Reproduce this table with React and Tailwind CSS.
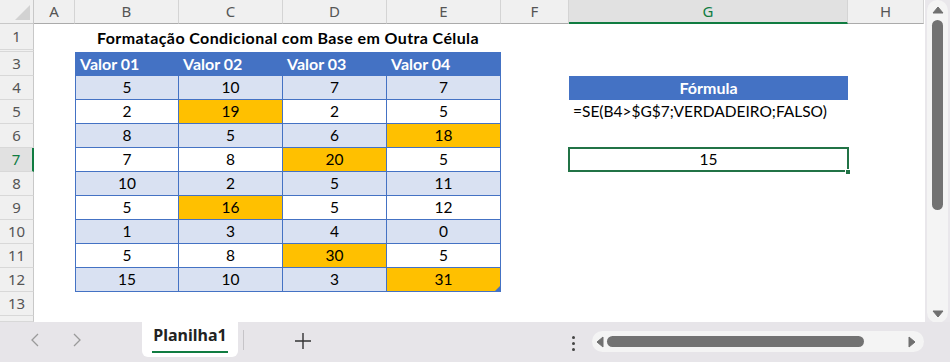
import React from "react";

// column widths for A..H
const COLS = ["w-[41px]", "w-[104px]", "w-[104px]", "w-[104px]", "w-[114px]", "w-[68px]", "w-[279px]", "w-[76px]"];
const LETTERS = ["A", "B", "C", "D", "E", "F", "G", "H"];

// table body: [values], index of highlighted cell (-1 = none)
const ROWS = [
  { n: 4, v: [5, 10, 7, 7], hi: -1 },
  { n: 5, v: [2, 19, 2, 5], hi: 1 },
  { n: 6, v: [8, 5, 6, 18], hi: 3 },
  { n: 7, v: [7, 8, 20, 5], hi: 2 },
  { n: 8, v: [10, 2, 5, 11], hi: -1 },
  { n: 9, v: [5, 16, 5, 12], hi: 1 },
  { n: 10, v: [1, 3, 4, 0], hi: -1 },
  { n: 11, v: [5, 8, 30, 5], hi: 2 },
  { n: 12, v: [15, 10, 3, 31], hi: 3 },
];

const cellFont = { fontFamily: "Lato, 'Open Sans', sans-serif" };

function RowHeader({ n, active, className = "" }) {
  return (
    <div
      className={`w-[34px] shrink-0 flex items-center justify-center text-[15px] border-b border-[#d8d8d8] ${
        active ? "bg-[#e1e1e1] text-[#107c41] border-r-2 border-r-[#107c41]" : "bg-[#f0f0f0] text-[#555] border-r border-r-[#c8c8c8]"
      } ${className}`}
      style={{ fontFamily: "'Noto Sans', sans-serif" }}
    >
      {n}
    </div>
  );
}

function GCell({ row }) {
  if (row === 4)
    return (
      <div className={`${COLS[6]} shrink-0 bg-[#4472c4] text-white font-bold text-[16px] flex items-center justify-center border-b border-[#4472c4]`}>
        Fórmula
      </div>
    );
  if (row === 5)
    return (
      <div className={`${COLS[6]} shrink-0 flex items-center pl-[4px] text-[15.5px] text-black whitespace-nowrap`}>
        =SE(B4&gt;$G$7;VERDADEIRO;FALSO)
      </div>
    );
  if (row === 7)
    return (
      <div className={`${COLS[6]} shrink-0 relative`}>
        <div className="absolute left-[-1px] right-[-1px] top-[-1px] bottom-0 border-2 border-[#217346] flex items-center justify-center text-[15.5px] text-black">
          15
        </div>
        <div className="absolute right-[-3px] bottom-[-3px] w-[6px] h-[6px] bg-[#217346] border border-white" />
      </div>
    );
  return <div className={`${COLS[6]} shrink-0`} />;
}

function Sheet() {
  return (
    <div className="w-[925px] bg-white flex flex-col overflow-hidden" style={cellFont}>
      {/* column headers */}
      <div className="flex h-[24px] shrink-0" style={{ fontFamily: "'Noto Sans', sans-serif" }}>
        <div className="w-[34px] shrink-0 bg-[#f0f0f0] border-r border-b border-[#c8c8c8] relative">
          <div className="absolute left-[15px] top-[5px] w-0 h-0 border-l-[15px] border-l-transparent border-b-[15px] border-b-[#d2d2d2]" />
        </div>
        {LETTERS.map((l, i) =>
          l === "G" ? (
            <div key={l} className={`${COLS[i]} shrink-0 bg-[#e1e1e1] text-[#107c41] text-[15px] flex items-center justify-center border-b-2 border-[#107c41] border-r border-r-[#d4d4d4]`}>
              {l}
            </div>
          ) : (
            <div key={l} className={`${COLS[i]} shrink-0 bg-[#f0f0f0] text-[#555] text-[15px] flex items-center justify-center border-b border-b-[#ababab] border-r border-r-[#d4d4d4]`}>
              {l}
            </div>
          )
        )}
      </div>

      {/* row 1: title */}
      <div className="flex h-[26px] shrink-0">
        <RowHeader n={1} />
        <div className={`${COLS[0]} shrink-0`} />
        <div className="w-[426px] shrink-0 flex items-end justify-center font-bold text-[16px] tracking-[0.4px] text-black">
          Formatação Condicional com Base em Outra Célula
        </div>
      </div>
      {/* hidden row 2 */}
      <div className="flex h-[2px] shrink-0">
        <RowHeader n="" className="text-[0px]" />
      </div>

      {/* row 3: table header */}
      <div className="flex h-[24px] shrink-0">
        <RowHeader n={3} />
        <div className={`${COLS[0]} shrink-0`} />
        {["Valor 01", "Valor 02", "Valor 03", "Valor 04"].map((h, i) => (
          <div
            key={h}
            className={`${COLS[i + 1]} shrink-0 bg-[#4472c4] text-white font-bold text-[16px] flex items-center pl-[4px] border-t border-b border-r border-[#4472c4] ${
              i === 0 ? "border-l" : ""
            }`}
          >
            {h}
          </div>
        ))}
      </div>

      {/* table body + column G */}
      {ROWS.map((r, ri) => {
        const band = ri % 2 === 0;
        return (
          <div key={r.n} className="flex h-[24px] shrink-0">
            <RowHeader n={r.n} active={r.n === 7} />
            <div className={`${COLS[0]} shrink-0`} />
            {r.v.map((v, i) => (
              <div
                key={i}
                className={`${COLS[i + 1]} shrink-0 relative flex items-center justify-center text-[15.5px] text-black border-b border-r border-[#4472c4] ${
                  i === 0 ? "border-l" : ""
                } ${r.hi === i ? "bg-[#ffc000]" : band ? "bg-[#d9e1f2]" : "bg-white"}`}
              >
                {v}
                {r.n === 12 && i === 3 && (
                  <div className="absolute right-0 bottom-0 w-[5px] h-[5px] bg-[#4472c4] [clip-path:polygon(100%_0,100%_100%,0_100%)]" />
                )}
              </div>
            ))}
            <div className={`${COLS[5]} shrink-0`} />
            <GCell row={r.n} />
          </div>
        );
      })}

      {/* row 13 and the partial row below */}
      <div className="flex h-[24px] shrink-0">
        <RowHeader n={13} />
      </div>
      <div className="flex h-[6px] shrink-0">
        <RowHeader n="" className="text-[0px]" />
      </div>
    </div>
  );
}

function VScroll() {
  return (
    <div className="w-[25px] bg-[#e9e7eb] pl-[2px] pr-[2px]">
      <div className="h-[323px] bg-[#f4f4f4] rounded-b-full rounded-t-full flex flex-col items-center pt-[6px]">
        <svg width="12" height="8" viewBox="0 0 12 8">
          <path d="M1 7 L6 1 L11 7 Z" fill="#707070" stroke="#707070" strokeLinejoin="round" />
        </svg>
        <div className="w-[11px] h-[190px] mt-[6px] bg-[#727272] rounded-full" />
        <div className="flex-1" />
        <svg width="12" height="8" viewBox="0 0 12 8" className="mb-[5px]">
          <path d="M1 1 L6 7 L11 1 Z" fill="#707070" stroke="#707070" strokeLinejoin="round" />
        </svg>
      </div>
    </div>
  );
}

function TabBar() {
  return (
    <div className="h-[40px] bg-[#e7e5e9] flex items-start relative" style={{ fontFamily: "'Noto Sans', sans-serif" }}>
      <div className="flex items-center h-[36px] pl-[29px] gap-[26px]">
        <svg width="14" height="16" viewBox="0 0 14 16">
          <path d="M9 2 L3 8 L9 14" fill="none" stroke="#9a9a9a" strokeWidth="1.3" />
        </svg>
        <svg width="14" height="16" viewBox="0 0 14 16">
          <path d="M5 2 L11 8 L5 14" fill="none" stroke="#9a9a9a" strokeWidth="1.3" />
        </svg>
      </div>
      <div className="ml-[59px] w-[96px] h-[35px] bg-white rounded-b-md flex flex-col items-center justify-center">
        <span className="text-[16px] font-bold text-[#222] leading-none mt-[1px]">Planilha1</span>
        <div className="w-[76px] h-[2px] bg-[#107c41] mt-[8px]" />
      </div>
      <div className="ml-[5px] mt-[8px] w-px h-[20px] bg-[#c6c4c8]" />
      <svg width="18" height="18" viewBox="0 0 18 18" className="ml-[50px] mt-[10px]">
        <path d="M9 1 V17 M1 9 H17" stroke="#333" strokeWidth="1.4" />
      </svg>
      <div className="ml-[260px] mt-[14px] flex flex-col gap-[3px]">
        <div className="w-[3px] h-[3px] bg-[#444] rounded-full" />
        <div className="w-[3px] h-[3px] bg-[#444] rounded-full" />
        <div className="w-[3px] h-[3px] bg-[#444] rounded-full" />
      </div>
      <div className="ml-[17px] mt-[9px] w-[332px] h-[21px] bg-[#f4f4f4] rounded-full flex items-center px-[4px]">
        <svg width="8" height="12" viewBox="0 0 8 12">
          <path d="M7 1 L1 6 L7 11 Z" fill="#707070" stroke="#707070" strokeLinejoin="round" />
        </svg>
        <div className="ml-[3px] w-[257px] h-[11px] bg-[#727272] rounded-full" />
        <div className="flex-1" />
        <svg width="8" height="12" viewBox="0 0 8 12" className="mr-[4px]">
          <path d="M1 1 L7 6 L1 11 Z" fill="#707070" stroke="#707070" strokeLinejoin="round" />
        </svg>
      </div>
    </div>
  );
}

export default function App() {
  return (
    <div className="w-[950px] h-[362px] flex flex-col overflow-hidden bg-white">
      <div className="flex h-[322px] shrink-0">
        <Sheet />
        <VScroll />
      </div>
      <TabBar />
    </div>
  );
}
